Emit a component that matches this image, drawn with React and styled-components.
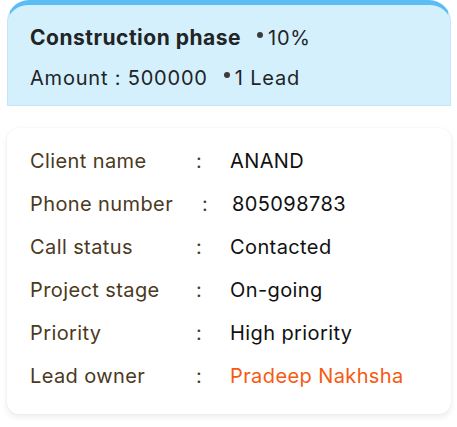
import React from "react";
import styled, { createGlobalStyle } from "styled-components";

const Global = createGlobalStyle`
  html, body { margin: 0; padding: 0; background: #ffffff; }
  body { font-family: "Inter", "Noto Sans", sans-serif; }
  * { box-sizing: border-box; }
`;

const Page = styled.div`
  width: 457px;
  height: 427px;
  padding: 0 6px 0 7px;
  display: flex;
  flex-direction: column;
  gap: 22px;
`;

const Header = styled.div`
  background: #d5f0fd;
  border-top: 5px solid #5cbcf4;
  border-left: 1px solid #c4e6f8;
  border-right: 1px solid #c4e6f8;
  border-bottom: 1px solid #c4e6f8;
  border-radius: 22px 22px 0 0;
  height: 106px;
  padding: 20px 0 0 22px;
  display: flex;
  flex-direction: column;
  gap: 14px;
  color: #222426;
`;

const HeadLine = styled.div`
  display: flex;
  align-items: center;
  font-size: ${(p) => (p.$bold ? "21px" : "20px")};
  font-weight: ${(p) => (p.$bold ? 700 : 400)};
  line-height: 26px;
  letter-spacing: ${(p) => (p.$bold ? "0.5px" : "0.8px")};
`;

const Meta = styled.span`
  display: flex;
  align-items: center;
  font-weight: 400;
  font-size: 20px;
  letter-spacing: 0.8px;
  margin-left: ${(p) => p.$gap || 15}px;
  &::before {
    content: "";
    width: 6px;
    height: 6px;
    border-radius: 50%;
    background: #3d3a38;
    margin-right: 5px;
    transform: translateY(-3px);
  }
`;

const Card = styled.div`
  background: #ffffff;
  border-radius: 12px;
  box-shadow: 0 3px 6px rgba(0, 0, 0, 0.08), 0 0 2px rgba(0, 0, 0, 0.05);
  height: 286px;
  padding: 20px 0 0 23px;
  display: flex;
  flex-direction: column;
  gap: 17px;
`;

const Row = styled.div`
  display: grid;
  grid-template-columns: 166px 34px 1fr;
  align-items: center;
  font-size: 20px;
  line-height: 26px;
  letter-spacing: 0.4px;
`;

const Label = styled.span`
  color: #4a3a1e;
`;

const Colon = styled.span`
  color: #4a3a1e;
  padding-left: ${(p) => p.$shift || 0}px;
`;

const Value = styled.span`
  color: ${(p) => (p.$accent ? "#f65a12" : "#111111")};
  padding-left: ${(p) => p.$shift || 0}px;
`;

const rows = [
  { label: "Client name", value: "ANAND" },
  { label: "Phone number", value: "805098783", shift: 6, vshift: 2 },
  { label: "Call status", value: "Contacted" },
  { label: "Project stage", value: "On-going" },
  { label: "Priority", value: "High priority" },
  { label: "Lead owner", value: "Pradeep Nakhsha", accent: true },
];

export default function App() {
  return (
    <>
      <Global />
      <Page>
        <Header>
          <HeadLine $bold>
            Construction phase
            <Meta $gap={16}>10%</Meta>
          </HeadLine>
          <HeadLine>
            Amount : 500000
            <Meta $gap={16}>1 Lead</Meta>
          </HeadLine>
        </Header>
        <Card>
          {rows.map((r) => (
            <Row key={r.label}>
              <Label>{r.label}</Label>
              <Colon $shift={r.shift}>:</Colon>
              <Value $accent={r.accent} $shift={r.vshift}>
                {r.value}
              </Value>
            </Row>
          ))}
        </Card>
      </Page>
    </>
  );
}
